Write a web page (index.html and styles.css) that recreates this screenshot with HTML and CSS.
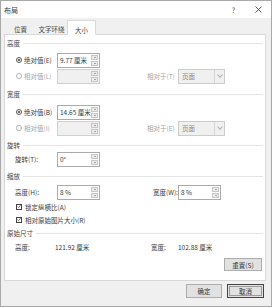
FILE: index.html
```html
<!DOCTYPE html>
<html lang="zh-CN">
<head>
    <meta charset="UTF-8">
    <title>布局</title>
    <link rel="stylesheet" href="styles.css">
</head>
<body>
    <div class="dialog">
        <div class="titlebar">
            <span class="title">布局</span>
            <span class="tb-btn">?</span>
            <span class="tb-btn">
                <svg width="7" height="7" viewBox="0 0 7 7"><path d="M0.5 0.5L6.5 6.5M6.5 0.5L0.5 6.5" stroke="#444" stroke-width="0.9"/></svg>
            </span>
        </div>

        <div class="body">
            <div class="tabs">
                <span class="tab tab-pos">位置</span>
                <span class="tab tab-wrap">文字环绕</span>
                <span class="tab active">大小</span>
            </div>

            <div class="panel">
                <!-- 高度 -->
                <div class="group-head">高度</div>
                <div class="row first">
                    <span class="opt"><i class="radio checked"></i>绝对值(E)</span>
                    <span class="spin"><span class="val">9.77 厘米</span><span class="arrows"><i class="up"></i><i class="down"></i></span></span>
                </div>
                <div class="row">
                    <span class="opt off"><i class="radio"></i>相对值(L)</span>
                    <span class="spin off"><span class="val"></span><span class="arrows"><i class="up"></i><i class="down"></i></span></span>
                    <span class="rel-label off">相对于(T)</span>
                    <span class="select"><span class="val">页面</span><span class="drop"><i></i></span></span>
                </div>

                <!-- 宽度 -->
                <div class="group-head next">宽度</div>
                <div class="row first wide">
                    <span class="opt"><i class="radio checked"></i>绝对值(B)</span>
                    <span class="spin"><span class="val">14.65 厘米</span><span class="arrows"><i class="up"></i><i class="down"></i></span></span>
                </div>
                <div class="row">
                    <span class="opt off"><i class="radio"></i>相对值(I)</span>
                    <span class="spin off"><span class="val"></span><span class="arrows"><i class="up"></i><i class="down"></i></span></span>
                    <span class="rel-label off">相对于(E)</span>
                    <span class="select"><span class="val">页面</span><span class="drop"><i></i></span></span>
                </div>

                <!-- 旋转 -->
                <div class="group-head rot">旋转</div>
                <div class="row tight">
                    <span class="field-label">旋转(T):</span>
                    <span class="spin"><span class="val">0°</span><span class="arrows"><i class="up"></i><i class="down"></i></span></span>
                </div>

                <!-- 缩放 -->
                <div class="group-head rot">缩放</div>
                <div class="row scale">
                    <span class="field-label">高度(H):</span>
                    <span class="spin"><span class="val">8 %</span><span class="arrows"><i class="up"></i><i class="down"></i></span></span>
                    <span class="field-label right">宽度(W):</span>
                    <span class="spin"><span class="val">8 %</span><span class="arrows"><i class="up"></i><i class="down"></i></span></span>
                </div>
                <div class="check-row">
                    <i class="check"><svg width="5" height="5" viewBox="0 0 5 5"><path d="M0.6 2.6L2 4L4.5 0.8" fill="none" stroke="#333" stroke-width="0.9"/></svg></i>锁定纵横比(A)
                </div>
                <div class="check-row">
                    <i class="check"><svg width="5" height="5" viewBox="0 0 5 5"><path d="M0.6 2.6L2 4L4.5 0.8" fill="none" stroke="#333" stroke-width="0.9"/></svg></i>相对原始图片大小(R)
                </div>

                <!-- 原始尺寸 -->
                <div class="group-head orig">原始尺寸</div>
                <div class="info-row">
                    <span class="info-label">高度:</span>
                    <span class="info-val">121.92 厘米</span>
                    <span class="info-label short">宽度:</span>
                    <span class="info-val">102.88 厘米</span>
                </div>
                <div class="reset-row">
                    <button class="btn reset">重置(S)</button>
                </div>
            </div>

            <div class="footer">
                <button class="btn ok">确定</button>
                <button class="btn cancel">取消</button>
            </div>
        </div>
    </div>
</body>
</html>
```

FILE: styles.css
```css
body {
    margin: 0;
    background: #fff;
    font-family: "Noto Sans CJK SC", "Noto Sans", sans-serif;
    font-size: 6.5px;
    color: #3a3a3a;
    white-space: nowrap;
}
.dialog {
    width: 272px;
    height: 307px;
    box-sizing: border-box;
    border: 1px solid #a9a9a9;
    display: flex;
    flex-direction: column;
    background: #f0f0f0;
}
.titlebar {
    height: 17px;
    flex-shrink: 0;
    background: #fff;
    display: flex;
    align-items: center;
    padding-left: 3px;
    font-size: 7px;
}
.title {
    flex: 1;
}
.tb-btn {
    width: 25px;
    display: flex;
    justify-content: center;
    align-items: center;
    color: #444;
}
.body {
    flex: 1;
    padding: 0 5px 0 3px;
    display: flex;
    flex-direction: column;
}
.tabs {
    height: 17px;
    display: flex;
    align-items: flex-end;
    margin-bottom: -1px;
}
.tab {
    height: 14px;
    box-sizing: border-box;
    padding-top: 2px;
    line-height: 12px;
    text-align: center;
    color: #444;
}
.tab-pos {
    width: 31px;
    margin-left: 1px;
}
.tab-wrap {
    width: 31px;
}
.tab.active {
    width: 29px;
    height: 15px;
    padding-top: 3px;
    background: #fff;
    border: 1px solid #d9d9d9;
    border-bottom: 1px solid #fff;
    position: relative;
    z-index: 1;
}
.panel {
    height: 247px;
    box-sizing: border-box;
    background: #fff;
    border: 1px solid #d9d9d9;
    padding: 3px 2px 0 2px;
}
.group-head {
    height: 10px;
    display: flex;
    align-items: center;
    gap: 3px;
    color: #444;
}
.group-head::after {
    content: "";
    flex: 1;
    border-top: 1px solid #e4e4e4;
}
.group-head.next {
    margin-top: 5px;
}
.group-head.rot {
    margin-top: 4px;
}
.group-head.orig {
    margin-top: 2px;
}
.row {
    height: 16px;
    display: flex;
    align-items: center;
}
.row.first {
    margin-top: 4px;
}
.row.wide {
    margin-top: 5px;
}
.row.tight {
    margin-top: 1px;
}
.row.scale {
    margin-top: 3px;
}
.opt {
    width: 41px;
    margin-left: 9px;
    display: flex;
    align-items: center;
    gap: 2px;
}
.off {
    color: #a3a3a3;
}
.radio {
    width: 6px;
    height: 6px;
    box-sizing: border-box;
    border: 1px solid #555;
    border-radius: 50%;
    display: flex;
    align-items: center;
    justify-content: center;
    background: #fff;
}
.radio.checked::after {
    content: "";
    width: 2px;
    height: 2px;
    border-radius: 50%;
    background: #333;
}
.off .radio {
    border-color: #b5b5b5;
}
.spin {
    width: 43px;
    height: 15px;
    box-sizing: border-box;
    border: 1px solid #ababab;
    background: #fff;
    display: flex;
}
.spin.off {
    background: #f0f0f0;
    border-color: #d0d0d0;
}
.spin .val {
    flex: 1;
    padding-left: 2px;
    line-height: 13px;
    overflow: hidden;
}
.arrows {
    width: 7px;
    margin: 1px 1px 1px 0;
    display: flex;
    flex-direction: column;
    gap: 1px;
}
.arrows i {
    flex: 1;
    background: #ececec;
    border: 1px solid #c6c6c6;
    display: flex;
    align-items: center;
    justify-content: center;
}
.arrows i::after {
    content: "";
    border-left: 1.5px solid transparent;
    border-right: 1.5px solid transparent;
}
.arrows .up::after {
    border-bottom: 1.5px solid #555;
}
.arrows .down::after {
    border-top: 1.5px solid #555;
}
.rel-label {
    width: 31px;
    margin-left: 47px;
}
.select {
    width: 47px;
    height: 15px;
    box-sizing: border-box;
    border: 1px solid #cccccc;
    background: #f0f0f0;
    display: flex;
    color: #888;
}
.select .val {
    flex: 1;
    padding-left: 3px;
    line-height: 13px;
}
.drop {
    width: 9px;
    border-left: 1px solid #d6d6d6;
    display: flex;
    justify-content: center;
    align-items: center;
}
.drop i {
    width: 3px;
    height: 3px;
    border-right: 1px solid #b0b0b0;
    border-bottom: 1px solid #b0b0b0;
    transform: translateY(-1px) rotate(45deg);
}
.field-label {
    width: 42px;
    padding-left: 8px;
}
.field-label.right {
    width: 25px;
    padding-left: 0;
    margin-left: 53px;
}
.check-row {
    height: 13px;
    margin-left: 9px;
    display: flex;
    align-items: center;
    gap: 2px;
}
.check {
    width: 6px;
    height: 6px;
    box-sizing: border-box;
    border: 1px solid #444;
    display: flex;
    align-items: center;
    justify-content: center;
    margin-right: 1px;
}
.check svg {
    display: block;
}
.info-row {
    height: 12px;
    margin-top: 3px;
    display: flex;
    align-items: center;
}
.info-label {
    width: 40px;
    padding-left: 8px;
}
.info-label.short {
    width: 27px;
    padding-left: 0;
}
.info-val {
    width: 96px;
}
.info-val:last-child {
    width: auto;
}
.reset-row {
    margin-top: 5px;
    display: flex;
    justify-content: flex-end;
    padding-right: 1px;
}
.btn {
    font-family: inherit;
    font-size: 6.5px;
    color: #333;
    height: 13px;
    padding: 0;
    background: #e1e1e1;
    border: 1px solid #adadad;
}
.reset {
    width: 38px;
}
.footer {
    display: flex;
    justify-content: flex-end;
    gap: 5px;
    padding: 3px 2px 0 0;
}
.ok {
    width: 36px;
    height: 14px;
}
.cancel {
    width: 37px;
    height: 14px;
    border: 1px solid #444;
    box-shadow: inset 0 0 0 1px #e1e1e1, inset 0 0 0 2px #9a9a9a;
}
```
